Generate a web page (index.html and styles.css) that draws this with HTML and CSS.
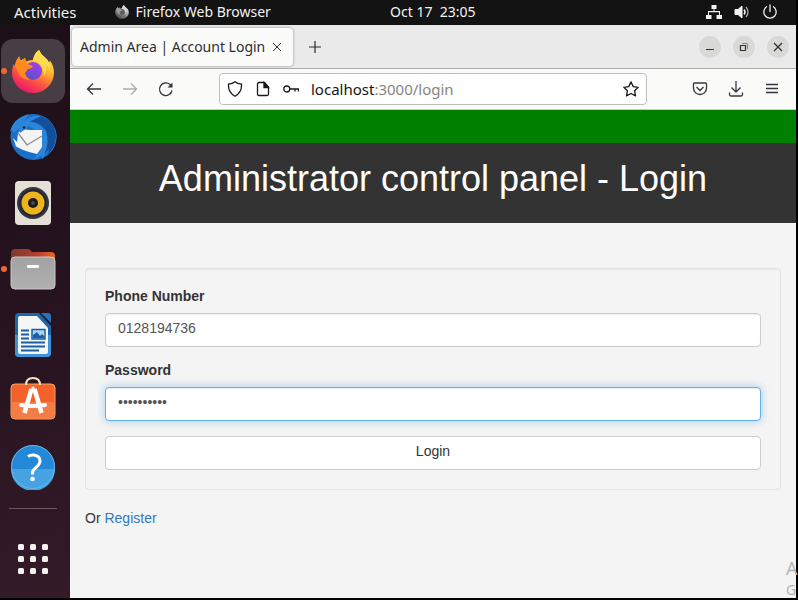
FILE: index.html
```html
<!DOCTYPE html>
<html lang="en">
<head>
<meta charset="UTF-8" />
<title>Admin Area | Account Login</title>
<link rel="stylesheet" href="styles.css">
</head>
<body>

<header class="topbar">
	<div class="topbar-left">
		<button type="button" class="activities">Activities</button>
		<button type="button" class="app-menu">
			<svg class="app-icon" viewBox="0 0 42 43"><use href="#firefox" /></svg>
			Firefox Web Browser
		</button>
	</div>
	<div class="clock">Oct 17&nbsp; 23:05</div>
	<div class="status">
		<svg width="16" height="16" viewBox="0 0 16 16" fill="#f2f2f2">
			<path d="M5.500 1h5v4h-2v2H14v4h2v4h-5.500v-4H13V8.200H3V11h2.500v4H0v-4h2V7h5.500V5h-2z" />
		</svg>
		<svg width="16" height="16" viewBox="0 0 16 16" fill="none" stroke="#f2f2f2">
			<path d="M1 5.500h3L8 2v12l-4-3.500H1z" fill="#f2f2f2" />
			<path d="M10 5.500q2 2.500 0 5" stroke-width="1.500" />
			<path d="M12 3q4 5 0 10" stroke="#aaa" stroke-width="1.300" />
		</svg>
		<svg width="16" height="16" viewBox="0 0 16 16" fill="none" stroke="#f2f2f2" stroke-width="1.300" stroke-linecap="round">
			<path d="M4.500 2.800a6.200 6.200 0 1 0 7 0M8 1v6.500" />
		</svg>
	</div>
</header>

<div class="desktop">
	<nav class="dock">
		<button type="button" class="dock-item current running" aria-label="Firefox">
			<svg width="42" height="43" viewBox="0 0 42 43">
				<defs>
					<linearGradient id="ff-body" x1="0.8" y1="0.1" x2="0.3" y2="1">
						<stop offset="0" stop-color="#ffe14a" />
						<stop offset="0.350" stop-color="#ffb02e" />
						<stop offset="0.650" stop-color="#ff5340" />
						<stop offset="1" stop-color="#e8156f" />
					</linearGradient>
					<linearGradient id="ff-globe" x1="0.8" y1="0" x2="0.2" y2="1">
						<stop offset="0" stop-color="#a53cf0" />
						<stop offset="1" stop-color="#5a52c8" />
					</linearGradient>
				</defs>
				<g id="firefox">
					<path d="M27 0q2 5 6 7.500 3 2 4 5l1-2q4 6 4 12A21 20.500 0 0 1 21 43 21 20.500 0 0 1 0 23Q0 18 1.500 14l1 2Q4 10 7 6.500l1.500 4L13 8l1 3.500q4-2 7-1.500 1-7 6-10z" fill="url(#ff-body)" />
					<circle cx="21" cy="21" r="9" fill="url(#ff-globe)" />
					<path d="M3 16Q4 10 7 6.500L9 11l4-3 1 4.500q2 2 7 3.500-1 2.500-5 3l-3 4q1 5 6 7-10 0-13-8z" fill="#ff8a1f" />
					<path d="M27 0q2 5 6 7.500 6 5 5 14-1-5-4-8 2 5-2 13 0-10-6-14.500-2.500-1.500-5-1.500 1-7 6-10.500z" fill="#ffdc4a" />
				</g>
			</svg>
		</button>
		<button type="button" class="dock-item" aria-label="Thunderbird">
			<svg width="48" height="48" viewBox="0 0 48 48">
				<circle cx="24.500" cy="24" r="23" fill="#1c6fc6" />
				<path d="M1 19Q4 5 20 1L14 9Q26-1 37 5q9 6 10.500 17 0 12-7 18l2-6-5 6-4 6-1-4-8 5q7-9 8-22-5-9-13-12Q10 13 5 20l-2-3z" fill="#2a86dc" />
				<path d="M32 3q14 5 15 20 0 11-8 18l1-5-5 6q6-12 2-24Q30 8 20 9z" fill="#154f9c" />
				<path d="M9 20q4-5 12-3h12v17l-5 7Q10 37 4 31l3 2-3-8 4 4z" fill="#f4f4f4" />
				<path d="M9 20l9 12 15-9" fill="none" stroke="#8c8c90" stroke-width="1.300" />
				<path d="M10 13q5-5 12-4-3 6-11 11z" fill="#2f86d8" />
				<circle cx="15" cy="14.500" r="1.300" fill="#281c34" />
			</svg>
		</button>
		<button type="button" class="dock-item" aria-label="Rhythmbox">
			<svg width="38" height="46" viewBox="0 0 38 46">
				<rect x="1" y="1" width="36" height="44" rx="4" fill="#e4e0d6" />
				<circle cx="19" cy="23" r="16" fill="#353542" />
				<circle cx="19" cy="23" r="13.500" fill="#24242c" />
				<circle cx="19" cy="23" r="11.500" fill="#edb51d" />
				<circle cx="19" cy="23" r="5" fill="#191922" />
				<circle cx="19" cy="23" r="2" fill="#4b4b52" />
			</svg>
		</button>
		<button type="button" class="dock-item running" aria-label="Files">
			<svg width="46" height="42" viewBox="0 0 46 42">
				<defs>
					<linearGradient id="folder-back">
						<stop offset="0" stop-color="#7b3a2c" />
						<stop offset="0.600" stop-color="#b63e30" />
						<stop offset="1" stop-color="#ee6526" />
					</linearGradient>
					<linearGradient id="folder-front" x2="0" y2="1">
						<stop offset="0" stop-color="#a2a2a2" />
						<stop offset="1" stop-color="#b0b0b0" />
					</linearGradient>
				</defs>
				<path d="M1 12V5q0-4 4-4h13q2 0 4 3h19q4 0 4 4v6z" fill="url(#folder-back)" />
				<rect x="1" y="9" width="44" height="32" rx="4" fill="url(#folder-front)" stroke="#c9c9c9" />
				<rect x="17" y="17" width="12" height="3" rx="1" fill="#fff" />
			</svg>
		</button>
		<button type="button" class="dock-item" aria-label="LibreOffice Writer">
			<svg width="38" height="46" viewBox="0 0 38 46">
				<path d="M5 1h20l12 13v27q0 4-4 4H5q-4 0-4-4V5q0-4 4-4z" fill="#1c68b0" />
				<path d="M1 23h36v18q0 4-4 4H5q-4 0-4-4z" fill="#3b93dc" />
				<path d="M27 1h7q3 0 3 3v7z" fill="#2274bd" />
				<path d="M6 4h17l11 12v24q0 2-2 2H6q-2 0-2-2V6q0-2 2-2z" fill="#f6f6f6" />
				<path d="M7 18.500h8M7 22.500h8M7 26.500h8M7 30.500h24M7 34.500h24M7 38.500h18" stroke="#185fa5" stroke-width="2" />
				<rect x="18" y="17.500" width="13" height="9.500" fill="#a7d6f5" stroke="#185fa5" stroke-width="1.500" />
				<path d="M19 26v-3l4-3 3 4 2-2 2 2v2z" fill="#185fa5" />
			</svg>
		</button>
		<button type="button" class="dock-item" aria-label="Ubuntu Software">
			<svg width="46" height="50" viewBox="0 0 46 50">
				<rect x="1" y="8" width="44" height="35" rx="4" fill="#f2622a" stroke="#f3a56b" />
				<path d="M2 26h42v13q0 3-3 3H5q-3 0-3-3z" fill="#f57c46" />
				<path d="M16 9Q16 2 23 2t7 7" fill="none" stroke="#f6dfba" stroke-width="2" />
				<path d="M21.500 13h3M21.500 13L14.500 37M24.500 13L31.500 37" fill="none" stroke="#fff" stroke-width="4.500" />
				<path d="M11 29q12 2 24 0" fill="none" stroke="#fff" stroke-width="4" stroke-linecap="round" />
			</svg>
		</button>
		<button type="button" class="dock-item" aria-label="Help">
			<svg width="46" height="46" viewBox="0 0 46 46">
				<circle cx="23" cy="23" r="22" fill="#2488d8" />
				<path d="M1 25a22 22 0 0 0 44 0z" fill="#46a3e2" />
				<circle cx="23" cy="23" r="21.500" fill="none" stroke="#6bb6e8" />
				<path d="M18 12.500q3-2 6-1.500 6 1 6 6 0 3-4 6.500-3.500 3-3.500 5v2" fill="none" stroke="#fff" stroke-width="3" />
				<circle cx="22.500" cy="35" r="2.300" fill="#fff" />
			</svg>
		</button>
		<hr class="dock-line" />
		<button type="button" class="dock-item" aria-label="Show Applications">
			<svg width="30" height="31" viewBox="0 0 30 31" fill="#f3f0ee">
				<rect width="6" height="6" rx="1.500" /><rect x="12" width="6" height="6" rx="1.500" /><rect x="24" width="6" height="6" rx="1.500" />
				<rect y="12" width="6" height="6" rx="1.500" /><rect x="12" y="12" width="6" height="6" rx="1.500" /><rect x="24" y="12" width="6" height="6" rx="1.500" />
				<rect y="24" width="6" height="6" rx="1.500" /><rect x="12" y="24" width="6" height="6" rx="1.500" /><rect x="24" y="24" width="6" height="6" rx="1.500" />
			</svg>
		</button>
	</nav>

	<div class="browser">
		<div class="tabs">
			<div class="tab">
				<span class="tab-title">Admin Area | Account Login</span>
				<button type="button" class="tab-close" aria-label="Close tab">
					<svg width="8" height="8" viewBox="0 0 8 8" stroke="#333"><path d="M0 0l8 8M8 0L0 8" /></svg>
				</button>
			</div>
			<button type="button" class="new-tab" aria-label="New tab">
				<svg width="12" height="12" viewBox="0 0 12 12" stroke="#2b2b2b" stroke-width="1.200"><path d="M6 0v12M0 6h12" /></svg>
			</button>
			<div class="window-buttons">
				<button type="button" aria-label="Minimize">
					<svg width="10" height="10" viewBox="0 0 10 10" stroke="#333"><path d="M1 7.500h8" /></svg>
				</button>
				<button type="button" aria-label="Restore">
					<svg width="10" height="10" viewBox="0 0 10 10" fill="none" stroke="#333"><path d="M3 1.500h5.500V7" stroke="#888" /><path d="M1.500 3.500h5v5h-5z" stroke-width="1.200" /></svg>
				</button>
				<button type="button" aria-label="Close">
					<svg width="10" height="10" viewBox="0 0 10 10" stroke="#333" stroke-width="1.300"><path d="M1 1l8 8M9 1L1 9" /></svg>
				</button>
			</div>
		</div>

		<div class="toolbar">
			<button type="button" class="tool" aria-label="Back">
				<svg width="16" height="16" viewBox="0 0 16 16"><path d="M15 8H1.500M7 2.500L1.500 8 7 13.500" /></svg>
			</button>
			<button type="button" class="tool" aria-label="Forward" disabled>
				<svg width="16" height="16" viewBox="0 0 16 16"><path d="M1 8h13.500M9 2.500L14.500 8 9 13.500" /></svg>
			</button>
			<button type="button" class="tool" aria-label="Reload">
				<svg width="16" height="16" viewBox="0 0 16 16"><path d="M14 9.500A6.300 6.300 0 1 1 12 3.500l2 2" /><path d="M14.500 1.500v5h-5z" fill="#38343c" stroke="none" /></svg>
			</button>
			<div class="urlbar">
				<svg width="16" height="16" viewBox="0 0 16 16"><path d="M8 .8Q10.500 2.800 14.500 3.200 15 11.500 8 15.200 1 11.500 1.500 3.200 5.500 2.800 8 .8z" /></svg>
				<svg width="16" height="16" viewBox="0 0 16 16"><path d="M4 1.500h5.500L13.500 6v7q0 1.500-1.500 1.500H4q-1.500 0-1.500-1.500V3Q2.500 1.500 4 1.500z" /><path d="M9 1.500V6.500h4.500z" fill="#1c171d" /></svg>
				<svg width="16" height="16" viewBox="0 0 16 16"><circle cx="3.800" cy="8" r="3" /><path d="M7 8h8.500v2.500M12 8v2.500" /></svg>
				<div class="url" contenteditable="true" role="textbox" aria-label="Address" spellcheck="false">localhost<span>:3000/login</span></div>
				<button type="button" class="star" aria-label="Bookmark this page">
					<svg width="16" height="16" viewBox="0 0 16 16"><path d="M8 .9l2.200 4.700 5 .7-3.600 3.500.9 5.100L8 12.500l-4.500 2.400.9-5.100L.8 6.300l5-.7z" stroke-linejoin="round" /></svg>
				</button>
			</div>
			<button type="button" class="tool" aria-label="Save to Pocket">
				<svg width="16" height="16" viewBox="0 0 16 16"><path d="M2.500 2h11q1 0 1 1v4a6.500 6.500 0 0 1-13 0V3q0-1 1-1zM4.500 6L8 9.500 11.500 6" /></svg>
			</button>
			<button type="button" class="tool" aria-label="Downloads">
				<svg width="16" height="16" viewBox="0 0 16 16"><path d="M8 0v10.500M3.500 6.500L8 11l4.500-4.500M1.500 11.500v2q0 1.500 1.500 1.500h10q1.500 0 1.500-1.500v-2" /></svg>
			</button>
			<button type="button" class="tool" aria-label="Menu">
				<svg width="16" height="16" viewBox="0 0 16 16"><path d="M2 3.500h12M2 7.500h12M2 11.500h12" /></svg>
			</button>
		</div>

		<main class="page">
			<div class="navbar"></div>
			<div class="page-header">
				<h1>Administrator control panel - Login</h1>
			</div>
			<div class="content">
				<form class="well">
					<div class="form-group">
						<label for="phone">Phone Number</label>
						<input type="text" id="phone" class="form-control" value="0128194736" />
					</div>
					<div class="form-group">
						<label for="password">Password</label>
						<input type="password" id="password" class="form-control active" value="adminadmin" />
					</div>
					<button type="button" class="btn">Login</button>
				</form>
				<p class="register">Or <a href="#">Register</a></p>
			</div>
		</main>
	</div>
</div>

<div class="watermark">
	<div class="watermark-title">A</div>
	<div>G</div>
</div>

</body>
</html>
```
FILE: styles.css
```css
* {
	box-sizing: border-box;
}
body {
	display: flex;
	flex-direction: column;
	min-height: 100vh;
	margin: 0;
	padding: 0 2px 2px 0;
	background-color: #000;
	font-family: "Noto Sans", "Open Sans", sans-serif;
	font-size: 14px;
}
button {
	padding: 0;
	border: 0;
	background: none;
	color: inherit;
	font: inherit;
}
svg {
	display: block;
	flex: none;
}

/* top panel */
.topbar {
	display: grid;
	grid-template-columns: 49% auto 1fr;
	height: 25px;
	padding-bottom: 2px;
	align-items: center;
	background-color: #131313;
	color: #f2f2f2;
	line-height: 22px;
}
.topbar-left {
	display: flex;
	gap: 38px;
	padding-left: 14px;
}
.activities {
	font-size: 15px;
}
.app-menu {
	display: flex;
	align-items: center;
	gap: 7px;
}
.app-icon {
	width: 14px;
	height: 14px;
	filter: grayscale(1);
}
.status {
	display: flex;
	justify-content: flex-end;
	gap: 12px;
	padding-right: 18px;
}

/* dock */
.desktop {
	display: flex;
	flex: 1;
}
.dock {
	display: flex;
	flex-direction: column;
	flex: none;
	gap: 2px;
	width: 70px;
	padding: 14px 5px 0 1px;
	background-image: linear-gradient(160deg, #1c0f18 0%, #26131f 50%, #331b28 100%);
}
.dock-item {
	position: relative;
	display: flex;
	align-items: center;
	justify-content: center;
	width: 64px;
	height: 64px;
	border-radius: 12px;
}
.dock-item.current {
	background-color: #473e45;
}
.dock-item.running:before {
	position: absolute;
	left: 0;
	width: 6px;
	height: 6px;
	border-radius: 50%;
	background-color: #ee6730;
	content: "";
}
.dock-line {
	width: 48px;
	margin: 7px auto 16px;
	border: 0;
	border-top: 1px solid #6a5a63;
}

/* browser window */
.browser {
	display: flex;
	flex: 1;
	flex-direction: column;
	min-width: 0;
	background-color: #f4f4f4;
}
.tabs {
	display: flex;
	align-items: center;
	height: 44px;
	padding: 0 7px 0 2px;
	border-bottom: 1px solid #aaa;
	background-color: #eaeaea;
}
.tab {
	display: flex;
	align-items: center;
	justify-content: space-between;
	width: 221px;
	height: 38px;
	padding: 0 12px 0 8px;
	border-radius: 4px;
	background-color: #fbfbfa;
	box-shadow: 0 0 3px rgba(0, 0, 0, 0.4);
	color: #2e2e34;
	white-space: nowrap;
}
.new-tab {
	padding: 10px 16px;
}
.window-buttons {
	display: flex;
	gap: 12px;
	margin-left: auto;
}
.window-buttons button {
	display: flex;
	align-items: center;
	justify-content: center;
	width: 22px;
	height: 22px;
	border-radius: 50%;
	background-color: #d9d9d6;
}
.toolbar {
	display: flex;
	align-items: center;
	height: 41px;
	padding: 0 6px;
	border-bottom: 1px solid #ccc;
	background-color: #fafaf9;
}
.toolbar svg {
	fill: none;
	stroke: #38343c;
	stroke-width: 1.3;
}
.tool {
	display: flex;
	align-items: center;
	justify-content: center;
	width: 36px;
	height: 32px;
}
.tool:disabled {
	opacity: 0.4;
}
.urlbar {
	display: flex;
	flex: 1;
	align-items: center;
	gap: 12px;
	height: 32px;
	margin: 0 35px;
	padding: 0 7px;
	border: 1px solid #bfbfbf;
	border-radius: 4px;
	background-color: #fff;
}
.urlbar svg {
	stroke: #1c171d;
}
.url {
	flex: 1;
	color: #15141a;
	font-size: 15px;
}
.url span {
	color: #85857f;
}

/* page */
.page {
	flex: 1;
	color: #333;
	font-family: "Liberation Sans", Arial, sans-serif;
	line-height: 16px;
}
.navbar {
	height: 33px;
	background-color: #008000;
}
.page-header {
	min-height: 80px;
	padding: 16px 15px 24px;
	background-color: #333;
	color: #fff;
	text-align: center;
}
.page-header h1 {
	margin: 0;
	font-size: 36px;
	font-weight: normal;
	line-height: 40px;
}
.content {
	padding: 45px 15px 0;
}
.well {
	padding: 19px;
	border: 1px solid #e3e3e3;
	border-radius: 4px;
	box-shadow: inset 0 1px 1px rgba(0, 0, 0, 0.05);
}
.form-group {
	margin-bottom: 15px;
}
.form-group label {
	display: block;
	margin-bottom: 9px;
	font-weight: bold;
}
.form-control,
.btn {
	display: block;
	width: 100%;
	height: 34px;
	padding: 4px 12px 8px;
	border: 1px solid #ccc;
	border-radius: 4px;
	background-color: #fff;
	color: #555;
	font-family: inherit;
	font-size: 14px;
}
.form-control {
	box-shadow: inset 0 1px 1px rgba(0, 0, 0, 0.075);
}
.form-control.active {
	border-color: #66afe9;
	outline: 0;
	box-shadow: inset 0 1px 1px rgba(0, 0, 0, 0.075), 0 0 8px rgba(102, 175, 233, 0.6);
}
.btn {
	color: #333;
}
.register {
	margin: 20px 0;
}
.register a {
	color: #337ab7;
	text-decoration: none;
}

/* desktop watermark */
.watermark {
	position: absolute;
	right: 0;
	bottom: 0;
	width: 12px;
	color: #b4b4b4;
	line-height: 20px;
}
.watermark-title {
	font-size: 18px;
	line-height: 24px;
}
```
